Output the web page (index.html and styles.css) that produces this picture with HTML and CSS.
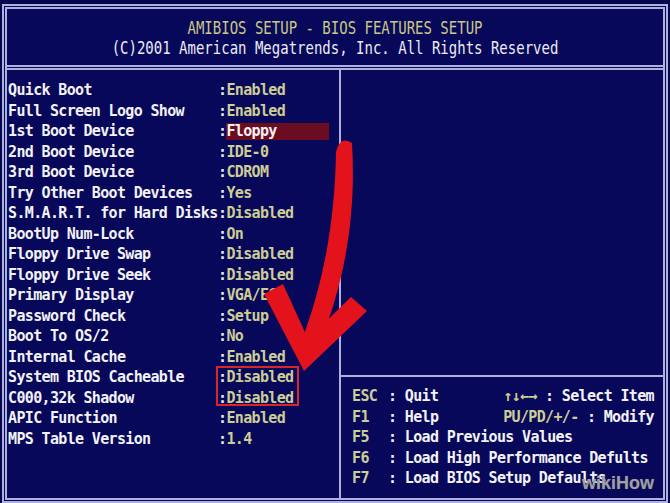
FILE: index.html
```html
<!DOCTYPE html>
<html lang="en">
<head>
    <meta charset="UTF-8">
    <meta name="viewport" content="width=device-width, initial-scale=1.0">
    <title>AMIBIOS Setup - BIOS Features Setup</title>
    <link rel="stylesheet" href="styles.css">
</head>
<body>
    <div class="page">
        <div class="screen">
            <div class="title">
                <div><span class="title-main">AMIBIOS SETUP - BIOS FEATURES SETUP</span></div>
                <div><span class="title-copy">(C)2001 American Megatrends, Inc. All Rights Reserved</span></div>
            </div>
            <div class="panels">
                <div class="options">
                    <div class="row"><span class="label">Quick Boot</span><span class="colon">:</span><span class="val">Enabled</span></div>
                    <div class="row"><span class="label">Full Screen Logo Show</span><span class="colon">:</span><span class="val">Enabled</span></div>
                    <div class="row"><span class="label">1st Boot Device</span><span class="colon">:</span><span class="val sel">Floppy</span></div>
                    <div class="row"><span class="label">2nd Boot Device</span><span class="colon">:</span><span class="val">IDE-0</span></div>
                    <div class="row"><span class="label">3rd Boot Device</span><span class="colon">:</span><span class="val">CDROM</span></div>
                    <div class="row"><span class="label">Try Other Boot Devices</span><span class="colon">:</span><span class="val">Yes</span></div>
                    <div class="row"><span class="label">S.M.A.R.T. for Hard Disks</span><span class="colon">:</span><span class="val">Disabled</span></div>
                    <div class="row"><span class="label">BootUp Num-Lock</span><span class="colon">:</span><span class="val">On</span></div>
                    <div class="row"><span class="label">Floppy Drive Swap</span><span class="colon">:</span><span class="val">Disabled</span></div>
                    <div class="row"><span class="label">Floppy Drive Seek</span><span class="colon">:</span><span class="val">Disabled</span></div>
                    <div class="row"><span class="label">Primary Display</span><span class="colon">:</span><span class="val">VGA/EGA</span></div>
                    <div class="row"><span class="label">Password Check</span><span class="colon">:</span><span class="val">Setup</span></div>
                    <div class="row"><span class="label">Boot To OS/2</span><span class="colon">:</span><span class="val">No</span></div>
                    <div class="row"><span class="label">Internal Cache</span><span class="colon">:</span><span class="val">Enabled</span></div>
                    <div class="row"><span class="label">System BIOS Cacheable</span><span class="colon">:</span><span class="val">Disabled</span></div>
                    <div class="row"><span class="label">C000,32k Shadow</span><span class="colon">:</span><span class="val">Disabled</span></div>
                    <div class="row"><span class="label">APIC Function</span><span class="colon">:</span><span class="val">Enabled</span></div>
                    <div class="row"><span class="label">MPS Table Version</span><span class="colon">:</span><span class="val">1.4</span></div>
                </div>
                <div class="side">
                    <div class="item-help"></div>
                    <div class="keys">
                        <div class="key-row"><span class="key">ESC</span><span class="desc">: Quit</span><span class="hint"><span class="hk">↑↓←→</span> : Select Item</span></div>
                        <div class="key-row"><span class="key">F1</span><span class="desc">: Help</span><span class="hint"><span class="hk">PU/PD/+/-</span> : Modify</span></div>
                        <div class="key-row"><span class="key">F5</span><span class="desc">: Load Previous Values</span></div>
                        <div class="key-row"><span class="key">F6</span><span class="desc">: Load High Performance Defults</span></div>
                        <div class="key-row"><span class="key">F7</span><span class="desc">: Load BIOS Setup Defaults</span></div>
                    </div>
                </div>
            </div>
        </div>

        <!-- annotation overlays -->
        <div class="mark"></div>
        <svg class="arrow" viewBox="0 0 670 503" width="670" height="503">
            <path d="M336 152 Q340 135 352 143 C356 212 347 276 318 349 L301 343 C325 279 335 217 336 152 Z" fill="#e3121b"/>
            <path d="M264 294 L283 284 L308 339 L351 297 L367 311 L304 371 Z" fill="#e3121b"/>
        </svg>
        <div class="watermark">wikiHow</div>
    </div>
</body>
</html>
```

FILE: styles.css
```css
/* Page */
body {
    margin: 0;
    background: #07074f;
    font-family: "DejaVu Sans Mono", "Liberation Mono", monospace;
}

.page {
    position: relative;
    width: 670px;
    height: 503px;
    overflow: hidden;
}

/* BIOS frame */
.screen {
    margin: 4px 2px 0;
    height: 499px;
    box-sizing: border-box;
    border: 5px double #aeb0e0;
    background: #08085a;
    display: flex;
    flex-direction: column;
}

.title {
    height: 61px;
    box-sizing: border-box;
    padding-top: 9px;
    border-bottom: 5px double #aeb0e0;
    text-align: center;
    font-size: 14px;
    line-height: 20px;
}

.title-main,
.title-copy {
    display: inline-block;
    transform: scaleY(1.25);
}

.title-main {
    color: #c9c985;
}

.title-copy {
    color: #ececf4;
}

.panels {
    flex: 1;
    display: grid;
    grid-template-columns: 332px 1fr;
}

/* Option list */
.options {
    padding: 10px 0 0 1px;
    font-size: 15px;
    font-weight: bold;
    letter-spacing: -0.65px;
}

.row {
    display: flex;
    align-items: center;
    height: 20.5px;
    white-space: pre;
}

.label {
    width: 210px;
    color: #f2f2f6;
}

.colon {
    color: #e6e6ee;
}

.val {
    color: #cdcd96;
}

.val.sel {
    width: 103px;
    height: 17px;
    line-height: 17px;
    background: #6b0d22;
    color: #fff2f2;
}

/* Right side */
.side {
    border-left: 2px solid #aeb0e0;
    display: flex;
    flex-direction: column;
}

.item-help {
    height: 305px;
    border-bottom: 2px solid #aeb0e0;
}

.keys {
    padding: 9px 9px 0 11px;
    font-size: 15px;
    font-weight: bold;
    letter-spacing: -0.65px;
}

.key-row {
    display: flex;
    height: 20.6px;
    line-height: 20.6px;
    white-space: pre;
    color: #f2f2f6;
}

.key {
    width: 36px;
    color: #cdcd96;
}

.hint {
    margin-left: auto;
}

.hk {
    color: #cdcd96;
}

/* Annotations */
.mark {
    position: absolute;
    left: 216px;
    top: 366px;
    width: 83px;
    height: 40px;
    box-sizing: border-box;
    border: 2px solid #d9242a;
}

.arrow {
    position: absolute;
    left: 0;
    top: 0;
    pointer-events: none;
}

.watermark {
    position: absolute;
    left: 582px;
    top: 473px;
    font-family: "Liberation Sans", Arial, sans-serif;
    font-weight: bold;
    font-size: 18px;
    color: rgba(196, 196, 206, 0.7);
    text-shadow: 0 0 1px #555;
}
```
